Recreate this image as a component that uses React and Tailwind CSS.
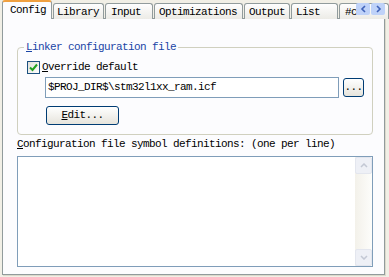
const TABS = [
  { label: 'Library', w: 'w-[51px]', pl: 'pl-[3px]' },
  { label: 'Input', w: 'w-[48px]', pl: 'pl-[5px]' },
  { label: 'Optimizations', w: 'w-[89px]', pl: 'pl-[4px]' },
  { label: 'Output', w: 'w-[46px]', pl: 'pl-[4px]' },
  { label: 'List', w: 'w-[47px]', pl: 'pl-[4px]' },
  { label: '#c', w: 'w-[50px]', pl: 'pl-[5px]' },
]

function Chevron({ dir }) {
  return (
    <svg width="7" height="8" viewBox="0 0 7 8">
      <path
        d={dir === 'left' ? 'M5 1 L2 4 L5 7' : 'M2 1 L5 4 L2 7'}
        fill="none"
        stroke="#3f62b8"
        strokeWidth="1.6"
      />
    </svg>
  )
}

function ScrollArrow({ up }) {
  return (
    <div className="w-[17px] h-[17px] rounded-[2px] border border-[#e3e6ee] bg-[#eef0f6] flex items-center justify-center">
      <svg width="8" height="5" viewBox="0 0 8 5">
        <path d={up ? 'M1 4 L4 1 L7 4' : 'M1 1 L4 4 L7 1'} fill="none" stroke="#c3c8d4" strokeWidth="1.5" />
      </svg>
    </div>
  )
}

export default function App() {
  return (
    <div className="w-[389px] h-[277px] bg-[#f1efe6] relative overflow-hidden font-['Liberation_Mono',monospace] text-[11px] tracking-[-0.6px] text-black">

      {/* tab strip */}
      <div className="flex items-end h-[19px] pl-[2px]">
        <div className="relative z-10 w-[51px] h-[19px] bg-[#fcfcfe] border border-b-0 border-[#919b9c] border-t-[2px] border-t-[#f0a040] rounded-t-[3px] pl-[7px] pt-[2px] leading-[12px]">
          Config
        </div>
        {TABS.map(t => (
          <div
            key={t.label}
            className={`${t.w} ${t.pl} ml-[1px] h-[16px] shrink-0 overflow-hidden whitespace-nowrap bg-gradient-to-b from-[#fefefe] to-[#ecebe6] border border-b-0 border-[#919b9c] rounded-t-[3px] leading-[14px] pt-[1px]`}
          >
            {t.label}
          </div>
        ))}
      </div>

      {/* tab scroll arrows */}
      <div className="absolute top-[3px] left-[356px] flex gap-[1px]">
        <div className="w-[14px] h-[12px] bg-[#bfd2f8] rounded-[2px] flex items-center justify-center">
          <Chevron dir="left" />
        </div>
        <div className="w-[14px] h-[12px] bg-[#bfd2f8] rounded-[2px] flex items-center justify-center">
          <Chevron dir="right" />
        </div>
      </div>

      {/* tab panel */}
      <div className="-mt-[1px] ml-[2px] w-[383px] h-[257px] border border-[#919b9c] bg-[#fcfcfe] shadow-[1px_1px_0_#dcd9cc]">

        <fieldset className="mt-[22px] ml-[14px] w-[356px] border border-[#d0d0bf] rounded-[4px] pl-[6px] pb-[9px]">
          <legend className="px-[2px] leading-[12px] text-[#1a45a6]">
            <span className="underline">L</span>inker configuration file
          </legend>

          <div className="flex items-center mt-[8px] ml-[3px]">
            <div className="w-[13px] h-[13px] border border-[#1c5180] bg-gradient-to-br from-[#e0e0da] to-[#fefefe] flex items-center justify-center">
              <svg width="9" height="9" viewBox="0 0 9 9">
                <path d="M1 4.5 L3.5 7 L8 1.5" fill="none" stroke="#21a121" strokeWidth="2" />
              </svg>
            </div>
            <span className="ml-[2px] leading-[13px]">
              <span className="underline">O</span>verride default
            </span>
          </div>

          <div className="flex items-center mt-[3px] ml-[21px]">
            <div className="w-[294px] h-[21px] border border-[#7f9db9] bg-white pl-[2px] leading-[19px]">
              $PROJ_DIR$\stm32l1xx_ram.icf
            </div>
            <button className="ml-[4px] w-[21px] h-[19px] rounded-[3px] border border-[#003c74] bg-gradient-to-b from-[#ffffff] to-[#e6e4dc] leading-[12px] pb-[2px]">
              ...
            </button>
          </div>

          <button className="mt-[8px] ml-[22px] w-[73px] h-[19px] rounded-[3px] border border-[#003c74] bg-gradient-to-b from-[#ffffff] to-[#e6e4dc] leading-[17px] block">
            <span className="underline">E</span>dit...
          </button>
        </fieldset>

        <div className="ml-[14px] mt-[3px] leading-[12px]">
          <span className="underline">C</span>onfiguration file symbol definitions: (one per line)
        </div>

        <div className="ml-[14px] mt-[6px] w-[356px] h-[111px] border border-[#7f9db9] bg-white flex justify-end">
          <div className="w-[17px] h-full bg-gradient-to-r from-[#f3f1ea] to-[#fdfdfb] flex flex-col justify-between">
            <ScrollArrow up />
            <ScrollArrow />
          </div>
        </div>
      </div>
    </div>
  )
}
